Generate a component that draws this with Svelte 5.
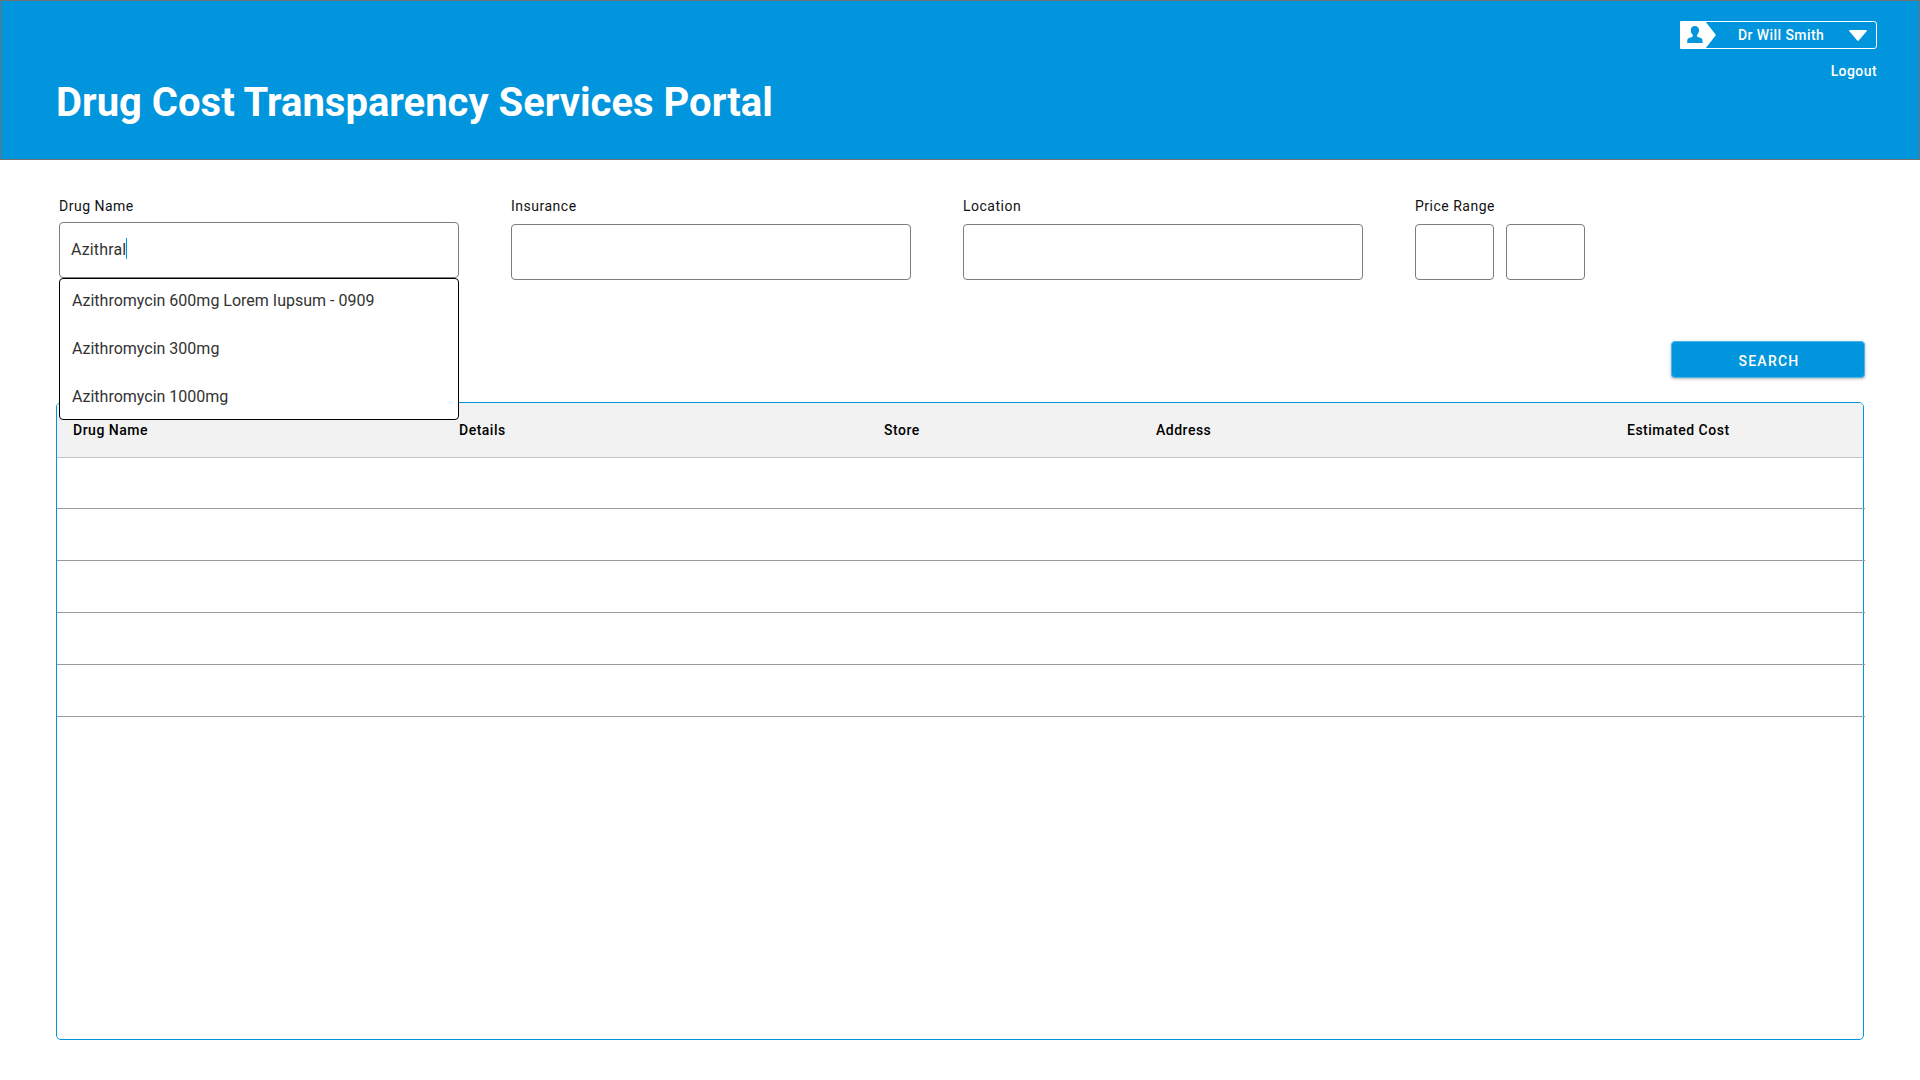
<script>
  const suggestions = [
    'Azithromycin 600mg Lorem Iupsum - 0909',
    'Azithromycin 300mg',
    'Azithromycin 1000mg'
  ];
  const columns = ['Drug Name', 'Details', 'Store', 'Address', 'Estimated Cost'];
  const rows = [1, 2, 3, 4, 5];
</script>

<div class="page">
  <header>
    <h1>Drug Cost Transparency Services Portal</h1>
    <div class="account">
      <div class="user">
        <svg class="tag" width="36" height="28" viewBox="0 0 36 28">
          <path d="M1 0H25L36 14L25 28H1Q0 28 0 27V1Q0 0 1 0Z" fill="#fff" />
          <path d="M14.8 4.9c2.6 0 4.2 1.7 4.2 4.3 0 1.9-.7 3.6-2 4.6v1.3c0 .5.3.8.8 1l3 1c1.4.5 1.8 1.5 1.8 4.9H7.2c0-3.4.4-4.4 1.8-4.9l3-1c.5-.2.8-.5.8-1v-1.3c-1.3-1-2-2.7-2-4.6 0-2.6 1.5-4.3 4-4.3Z" fill="#0095dc" />
        </svg>
        <span>Dr Will Smith</span>
        <svg class="arrow" width="18" height="11" viewBox="0 0 18 11"><path d="M.8 0H17.2Q18.4 .2 17.6 1.2L9.8 10.4Q9 11.1 8.2 10.4L.4 1.2Q-.4 .2 .8 0Z" fill="#fff" /></svg>
      </div>
      <a class="logout" href="#logout">Logout</a>
    </div>
  </header>

  <main>
    <div class="filters">
      <div class="field">
        <span class="label">Drug Name</span>
        <div class="box active"><span>Azithral</span><i class="caret"></i></div>
        <ul class="menu">
          {#each suggestions as s}<li>{s}</li>{/each}
        </ul>
      </div>
      <div class="field"><span class="label">Insurance</span><div class="box"></div></div>
      <div class="field"><span class="label">Location</span><div class="box"></div></div>
      <div class="field range">
        <span class="label">Price Range</span>
        <div class="pair"><div class="box"></div><div class="box"></div></div>
      </div>
    </div>

    <div class="actions"><button>SEARCH</button></div>

    <section class="table">
      <div class="head">{#each columns as c}<span>{c}</span>{/each}</div>
      {#each rows as r (r)}<div class="row"></div>{/each}
    </section>
  </main>
</div>

<style>
  :global(body) { margin: 0; background: #fff; }
  .page { width: 1920px; height: 1080px; overflow: hidden; font-family: Roboto, sans-serif; box-sizing: border-box; }
  .page * { box-sizing: border-box; }
  header {
    height: 160px; background: #0095dc; border: 1px solid #707070;
    display: flex; justify-content: space-between; padding: 20px 42px 0 55px;
  }
  h1 { margin: 56px 0 0; font-size: 40px; line-height: 52px; font-weight: 700; color: #fff; white-space: nowrap; }
  .account { display: flex; flex-direction: column; align-items: flex-end; color: #fff; font-size: 14px; font-weight: 500; letter-spacing: .5px; }
  .user { width: 197px; height: 28px; border: 1px solid #fff; border-radius: 3px; display: flex; align-items: center; }
  .tag { margin: -1px 0 -1px -1px; flex: none; }
  .user span { margin-left: 22px; white-space: nowrap; line-height: 20px; letter-spacing: .42px; }
  .arrow { margin-left: auto; margin-right: 9px; }
  .logout { color: #fff; text-decoration: none; margin-top: 12px; line-height: 20px; letter-spacing: .42px; }
  main { padding: 36px 55px 0 56px; }
  .filters { display: flex; gap: 52px; padding-left: 3px; height: 145px; }
  .field { width: 400px; position: relative; }
  .range { width: 170px; }
  .label { display: block; height: 28px; line-height: 20px; font-size: 14px; letter-spacing: .5px; color: #111; }
  .box { height: 56px; border: 1px solid #7d7d7d; border-radius: 4px; display: flex; align-items: center; background: #fff; }
  .active { margin-top: -2px; padding: 0 0 2px 11px; font-size: 16px; letter-spacing: .15px; color: #333; }
  .caret { width: 1px; height: 21px; background: #0095dc; margin-top: -1px; }
  .pair { display: flex; gap: 12px; }
  .pair .box { width: 79px; }
  .menu {
    position: absolute; z-index: 2; left: 0; top: 82px; width: 400px; height: 142px; margin: 0; padding: 0 0 0 12px;
    list-style: none; background: #fff; border: 1px solid #000; border-radius: 4px;
    font-size: 16px; color: #333;
  }
  .menu li { height: 48px; line-height: 44px; white-space: nowrap; }
  .actions { display: flex; justify-content: flex-end; height: 61px; }
  button {
    width: 194px; height: 37px; padding: 2px 0 0 2px; border: 1px solid #4db5e7; border-radius: 4px; background: #0095dc; color: #fff;
    font: 500 14px Roboto, sans-serif; letter-spacing: 1.25px; box-shadow: 0 1px 3px rgba(0, 0, 0, .3);
  }
  .table { width: 1808px; height: 638px; border: 1px solid #0095dc; border-radius: 5px; }
  .head {
    height: 55px; background: #f2f2f2; border-bottom: 1px solid #c4c4c4; border-radius: 4px 4px 0 0; padding-left: 16px;
    display: grid; grid-template-columns: 386px 425px 272px 471px 1fr; align-items: center;
    font-size: 14px; font-weight: 500; letter-spacing: .5px; color: #000;
  }
  .row { height: 52px; margin-right: -2px; border-bottom: 1px solid #9a9a9a; }
  .head + .row { height: 51px; }
</style>
